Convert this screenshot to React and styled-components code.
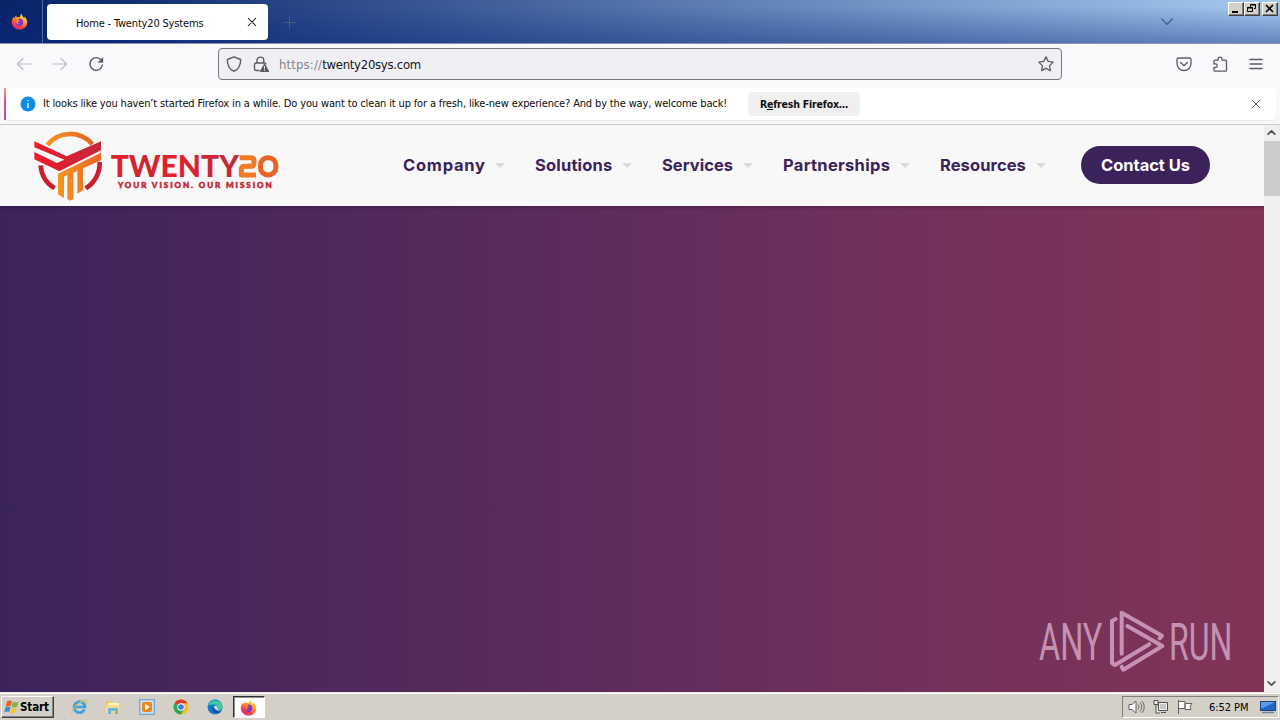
import React from 'react';
import styled, { createGlobalStyle } from 'styled-components';

const GlobalStyle = createGlobalStyle`
  * { box-sizing: border-box; }
  body { margin: 0; overflow: hidden; font-family: "DejaVu Sans Condensed", "DejaVu Sans", sans-serif; }
  svg { display: block; flex: none; }
`;

const ui = '"DejaVu Sans Condensed", "DejaVu Sans", sans-serif';

const Desktop = styled.div`
  width: 1280px;
  height: 720px;
  display: flex;
  flex-direction: column;
  overflow: hidden;
  background: #d4d0c8;
`;

/* ---------- tab strip ---------- */
const TabStrip = styled.div`
  height: 44px;
  flex: none;
  display: flex;
  align-items: flex-start;
  border-bottom: 1px solid #8c93ac;
  background:
    linear-gradient(to bottom, rgba(8, 30, 110, 0) 15%, rgba(8, 40, 125, 0.42) 100%),
    linear-gradient(to right, #0a246a 0%, #0f2b71 8%, #a6caf0 100%);
`;
const PinnedArea = styled.div`
  width: 43px;
  height: 43px;
  padding: 13px 0 0 11px;
  border-right: 1px solid #56699c;
`;
const Tab = styled.div`
  width: 221px;
  height: 36px;
  margin: 4px 0 0 4px;
  padding: 0 10px 0 29px;
  display: flex;
  align-items: center;
  justify-content: space-between;
  border-radius: 4px;
  background: #fff;
`;
const Label = styled.span`
  font-family: ${ui};
  font-size: ${(p) => p.$size || 11}px;
  letter-spacing: ${(p) => p.$track || 0}px;
  color: ${(p) => p.$color || '#0c0c0d'};
  white-space: nowrap;
`;
const TabTitle = styled(Label)`
  padding-top: 2px;
`;
const NewTab = styled.div`
  padding: 16px 0 0 15px;
  flex: 1;
`;
const ListTabs = styled.div`
  padding: 16px 55px 0 0;
`;
const WindowButtons = styled.div`
  display: flex;
  padding: 2px 2px 0 0;
`;
const WindowButton = styled.div`
  width: 16px;
  height: 14px;
  margin-left: ${(p) => p.$gap || 0}px;
  background: #d4d0c8;
  border: 1px solid;
  border-color: #fff #404040 #404040 #fff;
  box-shadow: inset -1px -1px 0 #808080;
`;

/* ---------- navigation toolbar ---------- */
const Toolbar = styled.div`
  height: 44px;
  flex: none;
  display: flex;
  align-items: center;
  padding: 0 16px 4px;
  background: #f9f9fb;
`;
const NavIcons = styled.div`
  display: flex;
  gap: 20px;
  width: 202px;
`;
const UrlBar = styled.div`
  width: 844px;
  height: 32px;
  display: flex;
  align-items: center;
  padding: 0 7px;
  border: 1px solid #77767c;
  border-radius: 4px;
  background: #f0f0f4;
`;
const UrlText = styled.div`
  flex: 1;
  margin-left: 10px;
  font-family: ${ui};
  font-size: 13px;
  letter-spacing: ${(p) => p.$track}px;
  white-space: nowrap;
  color: #15141a;
`;
const Scheme = styled.span`
  color: #85848c;
  letter-spacing: 0.15px;
`;
const ToolIcons = styled.div`
  margin-left: auto;
  display: flex;
  gap: 20px;
`;

/* ---------- notification ---------- */
const Notice = styled.div`
  height: 37px;
  flex: none;
  padding: 0 4px 4px;
  background: #f8f8f9;
  border-bottom: 1px solid #c9c9cc;
`;
const NoticeBox = styled.div`
  height: 32px;
  display: flex;
  align-items: center;
  padding: 0 14px 0 14px;
  border-radius: 4px;
  background: #fff;
  border-left: 2px solid;
  border-image: linear-gradient(#f59a6a, #ea4c89 40%, #a74fc8) 0 0 0 2;
  box-shadow: 0 1px 1px rgba(0, 0, 0, 0.06);
`;
const NoticeText = styled(Label)`
  width: 705px;
  margin-left: 7px;
  padding-bottom: 1px;
`;
const RefreshButton = styled.div`
  width: 112px;
  height: 24px;
  text-align: center;
  border-radius: 4px;
  background: #efeff0;
  font: bold 10.5px/24px ${ui};
  letter-spacing: -0.2px;
  color: #111;
  white-space: nowrap;
`;
const Pusher = styled.div`
  flex: 1;
`;

/* ---------- page ---------- */
const Viewport = styled.div`
  flex: 1;
  display: flex;
  min-height: 0;
`;
const Page = styled.div`
  flex: 1;
  display: flex;
  flex-direction: column;
`;
const SiteHeader = styled.header`
  height: 81px;
  flex: none;
  display: flex;
  align-items: center;
  padding: 0 54px 1px 30px;
  background: #f8f8f8;
`;
const LogoLink = styled.div`
  padding-top: 2px;
`;
const Menu = styled.nav`
  display: flex;
  margin-left: 123px;
`;
const MenuItem = styled.div`
  width: ${(p) => p.$width}px;
  display: flex;
  align-items: center;
  justify-content: space-between;
  margin-right: ${(p) => p.$after}px;
  font: 700 16.5px/24px Inter, sans-serif;
  letter-spacing: ${(p) => p.$track}px;
  white-space: nowrap;
  color: #3b225b;
`;
const Contact = styled.div`
  width: 129px;
  height: 38px;
  margin-left: auto;
  border-radius: 19px;
  background: #3b225b;
  font: 700 16.5px/38px Inter, sans-serif;
  letter-spacing: -0.05px;
  text-align: center;
  color: #fff;
`;
const Hero = styled.main`
  flex: 1;
  display: flex;
  align-items: flex-end;
  justify-content: flex-end;
  padding: 0 13px 13px 0;
  background: linear-gradient(to right, #3b235b 0%, #602c5c 50%, #6f305b 68%, #813457 100%);
  box-shadow: inset 0 3px 3px -1px rgba(30, 10, 40, 0.25);
`;
const ScrollBar = styled.div`
  width: 16px;
  display: flex;
  flex-direction: column;
  background: #f0f0f0;
`;
const ScrollArrow = styled.div`
  height: 16px;
  padding: 3px 3px;
`;
const Thumb = styled.div`
  height: 55px;
  background: #cbcbcb;
  margin-bottom: auto;
`;

/* ---------- task bar ---------- */
const TaskBar = styled.div`
  height: 28px;
  flex: none;
  display: flex;
  align-items: center;
  padding: 1px 1px 0 1px;
  background: #d4d0c8;
  border-top: 1px solid #e9e7e2;
  box-shadow: inset 0 1px 0 #fff;
`;
const StartButton = styled.div`
  width: 53px;
  height: 22px;
  display: flex;
  align-items: center;
  padding-left: 2px;
  border: 1px solid;
  border-color: #fff #404040 #404040 #fff;
  box-shadow: inset -1px -1px 0 #808080;
  font: bold 11.5px/20px ${ui};
  letter-spacing: -0.1px;
  color: #000;
`;
const QuickLaunch = styled.div`
  display: flex;
  align-items: center;
  gap: 18px;
  margin-left: 17px;
`;
const ActiveTask = styled.div`
  width: 32px;
  height: 22px;
  margin-left: 10px;
  padding: 2px 0 0 6px;
  background: #fff;
  border: 1px solid;
  border-color: #303030 #fff #fff #303030;
  box-shadow: inset 1px 1px 0 #909090;
`;
const Tray = styled.div`
  width: 157px;
  height: 22px;
  margin-left: auto;
  display: flex;
  align-items: center;
  padding-left: 5px;
  border: 1px solid;
  border-color: #808080 #fff #fff #808080;
`;
const TrayIcons = styled.div`
  display: flex;
  gap: 8px;
`;
const Clock = styled(Label)`
  width: 49px;
  margin-left: 16px;
  color: #000;
`;

/* ---------- icons ---------- */
const Line = ({ size = 16, color = '#5b5b66', width = 1.2, children, ...rest }) => (
  <svg width={size} height={size} viewBox="0 0 16 16" fill="none" stroke={color} strokeWidth={width}
    strokeLinecap="round" strokeLinejoin="round" {...rest}>{children}</svg>
);

const LockIcon = styled(Line)`
  margin-left: 11px;
`;

const Firefox = ({ id, size = 17 }) => (
  <svg width={size} height={size} viewBox="0 0 17 17">
    <defs>
      <linearGradient id={id} x1="0.8" y1="0" x2="0.25" y2="1">
        <stop offset="0" stopColor="#fff04f" />
        <stop offset="0.35" stopColor="#ffa52e" />
        <stop offset="0.7" stopColor="#ff4c3c" />
        <stop offset="1" stopColor="#e31587" />
      </linearGradient>
    </defs>
    <path fill={`url(#${id})`} d="M11 .6c-.5 1.200 .1 2.300 1.200 3.300l1 1c.3-.4.3-1 .2-1.500 1.700 1.500 2.800 3.600 2.800 5.800 0 4.200-3.300 7.300-7.600 7.300S.8 13.300.8 9.200C.8 7.300 1.500 5.400 2.700 3.800c0 .6.1 1.100.4 1.500C3.700 3.900 4.400 3 5.300 2.400c-.1.7 0 1.300.4 1.800C7 4 8 4 9 4.200 9 2.700 9.900 1.300 11 .6z" />
    <path fill="#7139d4" d="M8.300 5.600c2.400 0 3.900 1.700 3.900 3.700s-1.600 3.700-3.700 3.700-3.900-1.500-3.900-3.500c0-.6.1-1.200.4-1.700.6 0 1.300.1 1.900.5.600-.3 1.300-.4 1.900-.7.3-.5-.5-.7-1.500-.8.1-.6.500-1 1-1.200z" />
    <path fill="#ff7a35" d="M4.500 7.300c1-.4 1.900 0 2.600.5.600-.3 1.300-.3 1.900-.3-.2.900-1 1.200-1.900 1.500-.3 1.400.8 2 1.800 1.700-1.600 1.300-4.100.2-4.400-3.400z" />
  </svg>
);

const Logo = () => (
  <svg width="250" height="76" viewBox="30 22 750 228">
    <defs>
      <linearGradient id="lgRed"><stop offset="0" stopColor="#ec1c2a" /><stop offset="1" stopColor="#c3273a" /></linearGradient>
      <linearGradient id="lgOrange"><stop offset="0" stopColor="#f7941e" /><stop offset="1" stopColor="#e8642a" /></linearGradient>
      <linearGradient id="lgWord"><stop offset="0" stopColor="#e81f2b" /><stop offset=".25" stopColor="#cc2733" /><stop offset=".5" stopColor="#e3202c" /><stop offset="1" stopColor="#bd2c3b" /></linearGradient>
    </defs>
    <path d="M82 73A87 87 0 0 1 217 71" fill="none" stroke="url(#lgOrange)" strokeWidth="14" />
    <path d="M62 134A88 88 0 0 0 104 203M239 124A88 88 0 0 1 197 203" fill="none" stroke="#c8202f" strokeWidth="14" />
    <path fill="url(#lgRed)" d="M43 62L140 107L243 62V89L118 152L43 116V94L111 127L133 117L43 80Z" />
    <path fill="url(#lgOrange)" d="M243 96V119L189 143V209L172 219V151L160 156V235L150 240L142 235V163L132 168V232L114 221V159Z" />
    <text x="272" y="170" fontFamily="Lato, sans-serif" fontWeight="900" fontSize="91" textLength="385" lengthAdjust="spacingAndGlyphs" fill="url(#lgWord)">TWENTY</text>
    <path fill="none" stroke="#f07a25" strokeWidth="15" strokeLinejoin="round" d="M659 111H692Q702 111 702 121V127Q702 137 692 137H674Q664 137 664 147V163H708" />
    <rect x="721.500" y="111" width="46" height="52" rx="22" fill="none" stroke="#ea6428" strokeWidth="15" />
    <text x="294" y="203" fontFamily="Lato, sans-serif" fontWeight="900" fontSize="24" stroke="#c3242f" strokeWidth="1.500" fill="#c3242f" textLength="461">YOUR VISION. OUR MISSION</text>
  </svg>
);

const Watermark = () => (
  <svg width="216" height="70" viewBox="45 40 648 210" overflow="visible">
    <g fill="#c392b2" fontFamily="Roboto, sans-serif" fontWeight="400">
      <text x="57" y="192" fontSize="153" textLength="190" lengthAdjust="spacingAndGlyphs">ANY</text>
      <text x="447" y="192" fontSize="153" textLength="190" lengthAdjust="spacingAndGlyphs">RUN</text>
    </g>
    <g fill="none" stroke="#c890b4" strokeWidth="12" strokeLinejoin="round" strokeLinecap="round">
      <path d="M287 70L276 76V202L285 208L388 146" />
      <path d="M305 174V51L426 120L419 128" />
      <path d="M322 91L427 151L310 222L305 213" />
    </g>
  </svg>
);

const Caret = () => (
  <svg width="10" height="5" viewBox="0 0 10 5"><path d="M0 0h10L5 5z" fill="#dadada" /></svg>
);

const menu = [
  { text: 'Company', width: 102, after: 30, track: 0.75 },
  { text: 'Solutions', width: 97, after: 30, track: 0.18 },
  { text: 'Services', width: 91, after: 30, track: 0.05 },
  { text: 'Partnerships', width: 127, after: 30, track: 0.3 },
  { text: 'Resources', width: 106, after: 0, track: 0.08 },
];

export default function App() {
  return (
    <Desktop>
      <GlobalStyle />
      <TabStrip>
        <PinnedArea><Firefox id="ffTab" /></PinnedArea>
        <Tab>
          <TabTitle $track={-0.17}>Home - Twenty20 Systems</TabTitle>
          <Line size={12} color="#15141a" width={1.4}><path d="M3 3l10 10M13 3L3 13" /></Line>
        </Tab>
        <NewTab><Line size={13} color="#4d5d79"><path d="M8 1v14M1 8h14" /></Line></NewTab>
        <ListTabs><Line size={12} color="#49658f" width={2}><path d="M1 4l7 7 7-7" /></Line></ListTabs>
        <WindowButtons>
          <WindowButton><svg width="13" height="11"><path d="M3 9h6" stroke="#000" strokeWidth="2" /></svg></WindowButton>
          <WindowButton><svg width="13" height="11" fill="none" stroke="#000"><path d="M5.500 4V1.500h5v4H9M5 2h6M2.500 4.500h5v4h-5zM2 5h6" /></svg></WindowButton>
          <WindowButton $gap={2}><svg width="13" height="11"><path d="M3 2l7 7M10 2L3 9" stroke="#000" strokeWidth="1.600" /></svg></WindowButton>
        </WindowButtons>
      </TabStrip>

      <Toolbar>
        <NavIcons>
          <Line color="#bcbcc2"><path d="M15 8H1.500M7 2.500L1.500 8L7 13.500" /></Line>
          <Line color="#bcbcc2"><path d="M1 8h13.500M9 2.500L14.500 8L9 13.500" /></Line>
          <Line width={1.4}><path d="M13.500 4.500A6.300 6.300 0 1 0 14.400 9" /><path d="M15 1.500v5h-5z" fill="#5b5b66" strokeWidth=".3" /></Line>
        </NavIcons>
        <UrlBar>
          <Line width={1.4}><path d="M8 .8L14.600 3.500C15 8.500 12.500 14 8 15.200C3.500 14 1 8.500 1.400 3.500Z" /></Line>
          <LockIcon width={1.4}>
            <path d="M4 7V4.500a3.400 3.400 0 0 1 6.800 0V7M6 14.500H3.200A1.700 1.700 0 0 1 1.500 12.800V8.700A1.700 1.700 0 0 1 3.200 7h8.300a1.700 1.700 0 0 1 1.500 1" />
            <path d="M11.500 8.500L15.500 15.300H7.500Z" fill="#5b5b66" />
            <path d="M11.500 10.500v2M11.500 14v.2" stroke="#fff" strokeWidth="1" />
          </LockIcon>
          <UrlText $track={-0.28}><Scheme>https://</Scheme>twenty20sys.com</UrlText>
          <Line width={1.3}><path d="M8 .9l2.200 4.500 5 .7-3.600 3.500.8 5L8 12.300l-4.400 2.300.8-5L.8 6.100l5-.7z" /></Line>
        </UrlBar>
        <ToolIcons>
          <Line width={1.3}><path d="M2.500 2h11a1.500 1.500 0 0 1 1.500 1.500V7.500a7 7 0 0 1-14 0V3.500A1.500 1.500 0 0 1 2.500 2zM4.600 6.500L8 9.700l3.400-3.200" /></Line>
          <Line width={1.3}><path d="M2 5.200a1 1 0 0 1 1-1h3.200V3a1.900 1.900 0 0 1 3.800 0v1.200h3.500a1 1 0 0 1 1 1v9a1 1 0 0 1-1 1H3a1 1 0 0 1-1-1v-2.700h1.500a1.800 1.800 0 0 0 0-3.600H2z" /></Line>
          <Line width={1.3}><path d="M2 3.500h12M2 8h12M2 12.500h12" /></Line>
        </ToolIcons>
      </Toolbar>

      <Notice>
        <NoticeBox>
          <svg width="16" height="16" viewBox="0 0 16 16"><circle cx="8" cy="8" r="7.500" fill="#0a8ce8" /><path d="M8 7v5M8 4v1.300" stroke="#fff" strokeWidth="1.300" /></svg>
          <NoticeText $track={-0.148}>It looks like you haven’t started Firefox in a while. Do you want to clean it up for a fresh, like-new experience? And by the way, welcome back!</NoticeText>
          <RefreshButton>R<u>e</u>fresh Firefox…</RefreshButton>
          <Pusher />
          <Line size={12}><path d="M3 3l10 10M13 3L3 13" /></Line>
        </NoticeBox>
      </Notice>

      <Viewport>
        <Page>
          <SiteHeader>
            <LogoLink><Logo /></LogoLink>
            <Menu>
              {menu.map((m) => (
                <MenuItem key={m.text} $width={m.width} $after={m.after} $track={m.track}>{m.text}<Caret /></MenuItem>
              ))}
            </Menu>
            <Contact>Contact Us</Contact>
          </SiteHeader>
          <Hero><Watermark /></Hero>
        </Page>
        <ScrollBar>
          <ScrollArrow><Line size={9} color="#505050" width={3}><path d="M2 11l6-6 6 6" /></Line></ScrollArrow>
          <Thumb />
          <ScrollArrow><Line size={9} color="#505050" width={3}><path d="M2 5l6 6 6-6" /></Line></ScrollArrow>
        </ScrollBar>
      </Viewport>

      <TaskBar>
        <StartButton>
          <svg width="16" height="16" viewBox="0 0 16 16">
            <path fill="#e8602c" d="M3 2.500Q5.500.8 8 2.300L6.700 7.200Q4 6 1.700 7.400z" />
            <path fill="#7cb740" d="M8.800 2.800Q11.500 4.200 14.500 2.800L13 7.700Q10.200 9 7.500 7.700z" />
            <path fill="#3d8dd0" d="M1.500 8.300Q4 7 6.500 8.200L5.200 13Q2.500 11.800.2 13.200z" />
            <path fill="#f6c52c" d="M7.300 8.600Q10 10 12.700 8.600L11.300 13.500Q8.500 14.800 5.900 13.500z" />
          </svg>
          Start
        </StartButton>
        <QuickLaunch>
          <svg width="16" height="16" viewBox="0 0 16 16"><path d="M13.500 10.500A5.500 5.500 0 1 1 14 8H4" fill="none" stroke="#35a4df" strokeWidth="2.700" /><path d="M1.200 14.500C-1 12 8 2.500 14 1.200c2-.2 1.800 2 .5 3.800" fill="none" stroke="#d9b956" strokeWidth="1.200" /></svg>
          <svg width="16" height="16" viewBox="0 0 16 16"><path d="M1 2h5l1 2h7v9H1z" fill="#e8c965" /><path d="M3 4h11v3H3z" fill="#fff4bd" /><path d="M1 6h13v8H1z" fill="#f5dc87" /><path d="M3 15V10q0-1 1-1h8q1 0 1 1v5h-3v-3H6v3z" fill="#6bb8dd" /></svg>
          <svg width="16" height="16" viewBox="0 0 16 16"><rect x=".7" y=".7" width="14.600" height="14.600" fill="#c7e0f2" stroke="#5b9cca" /><rect x="3" y="3" width="10" height="10" rx="2" fill="#f0851c" /><path d="M6 4.800l5 3.200-5 3.200z" fill="#fff" /></svg>
          <svg width="16" height="16" viewBox="0 0 16 16"><circle cx="8" cy="8" r="7.500" fill="#f9bf16" /><path d="M8 8L1.500 4.250A7.500 7.500 0 0 1 14.500 4.250H8z" fill="#e33b2e" /><path d="M8 8L1.500 4.250A7.500 7.500 0 0 0 8 15.500L11.200 9.900z" fill="#2da94f" /><circle cx="8" cy="8" r="3.700" fill="#fff" /><circle cx="8" cy="8" r="2.800" fill="#3a7be8" /></svg>
          <svg width="16" height="16" viewBox="0 0 16 16"><circle cx="8" cy="8" r="7.500" fill="#1679c8" /><path d="M1 6.500A7.500 7.500 0 0 1 15.500 8c0 2.300-2 3.200-4 3-1.500-.2-2-.8-1.200-1.500C11 7.500 9 5.500 6.500 5.500 4 5.500 1.500 6 .7 7z" fill="#43c8a0" /><path d="M1 6.500A7.500 7.500 0 0 1 10 .8C7 2 3 3 1 6.500z" fill="#2bafd4" /><path d="M6 8c-2 3 .5 6.500 5 6 1.500-.2 2.800-1.200 3.500-2-3 1.300-7 .5-8.500-4z" fill="#174e96" /><path d="M7 7.500c2-1 4 0 3.300 2-.4 1.200 1.700 1.800 3.700 1.300-1 1-6 1.500-7-3.300z" fill="#dfe6e2" /></svg>
        </QuickLaunch>
        <ActiveTask><Firefox id="ffTask" /></ActiveTask>
        <Tray>
          <TrayIcons>
            <svg width="17" height="16" viewBox="0 0 17 16" fill="#fff" stroke="#606060"><path d="M1 5.500h3L8 2v12l-4-3.500H1z" /><path d="M10 5.500q2 2.500 0 5M12 3.500q3.500 4.500 0 9M14 2q4.500 6 0 12" fill="none" strokeWidth=".9" /></svg>
            <svg width="16" height="16" viewBox="0 0 16 16" fill="#eee" stroke="#505050"><path d="M5.500 3.500h9v8h-9zM8 13.500h5M1 1.500h4v4H1zM3 6v8h4" /><path d="M7 5h6v5H7z" fill="#c8c8c8" stroke="none" /></svg>
            <svg width="16" height="16" viewBox="0 0 16 16" fill="#fff" stroke="#606060"><path d="M1.500 1v14M2 2.500h6v7H2M8 4.500h7l-2 3 1 3H8z" /></svg>
          </TrayIcons>
          <Clock $track={-0.05}>6:52 PM</Clock>
          <svg width="18" height="16" viewBox="-2 0 18 16"><rect x=".5" y="2.500" width="15" height="9" fill="#1e66cc" stroke="#174784" /><path d="M1 3h14L3 9H1z" fill="#5d9be8" /><path d="M2 13.500h12" stroke="#72889e" strokeWidth="1.500" /></svg>
        </Tray>
      </TaskBar>
    </Desktop>
  );
}
